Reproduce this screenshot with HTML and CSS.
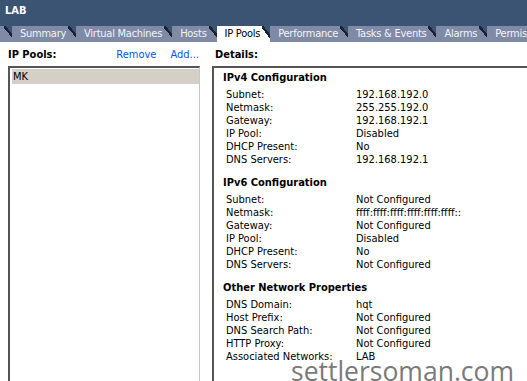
FILE: index.html
```html
<!DOCTYPE html>
<html>

<head>
    <title>LAB - IP Pools</title>
    <meta charset='utf-8' />
    <link rel="stylesheet" href="styles.css">
</head>

<body>
    <div class="top">
        <div class="title">LAB</div>
        <div class="tabs">
            <span class="tab first"></span>
            <span class="tab">Summary</span>
            <span class="tab">Virtual Machines</span>
            <span class="tab">Hosts</span>
            <span class="tab active">IP Pools</span>
            <span class="tab">Performance</span>
            <span class="tab">Tasks &amp; Events</span>
            <span class="tab">Alarms</span>
            <span class="tab">Permissions</span>
        </div>
    </div>

    <div class="main">
        <div class="pane">
            <div class="pane-head">
                <b>IP Pools:</b>
                <a href="#" class="link remove">Remove</a>
                <a href="#" class="link">Add...</a>
            </div>
            <div class="box list">
                <div class="item sel">MK</div>
            </div>
        </div>

        <div class="pane">
            <div class="pane-head"><b>Details:</b></div>
            <div class="box details">
                <div class="section">
                    <div class="sec-title">IPv4 Configuration</div>
                    <div class="row"><span>Subnet:</span><span>192.168.192.0</span></div>
                    <div class="row"><span>Netmask:</span><span>255.255.192.0</span></div>
                    <div class="row"><span>Gateway:</span><span>192.168.192.1</span></div>
                    <div class="row"><span>IP Pool:</span><span>Disabled</span></div>
                    <div class="row"><span>DHCP Present:</span><span>No</span></div>
                    <div class="row"><span>DNS Servers:</span><span>192.168.192.1</span></div>
                </div>
                <div class="section">
                    <div class="sec-title">IPv6 Configuration</div>
                    <div class="row"><span>Subnet:</span><span>Not Configured</span></div>
                    <div class="row"><span>Netmask:</span><span>ffff:ffff:ffff:ffff:ffff:ffff::</span></div>
                    <div class="row"><span>Gateway:</span><span>Not Configured</span></div>
                    <div class="row"><span>IP Pool:</span><span>Disabled</span></div>
                    <div class="row"><span>DHCP Present:</span><span>No</span></div>
                    <div class="row"><span>DNS Servers:</span><span>Not Configured</span></div>
                </div>
                <div class="section">
                    <div class="sec-title">Other Network Properties</div>
                    <div class="row"><span>DNS Domain:</span><span>hqt</span></div>
                    <div class="row"><span>Host Prefix:</span><span>Not Configured</span></div>
                    <div class="row"><span>DNS Search Path:</span><span>Not Configured</span></div>
                    <div class="row"><span>HTTP Proxy:</span><span>Not Configured</span></div>
                    <div class="row"><span>Associated Networks:</span><span>LAB</span></div>
                </div>
            </div>
        </div>
    </div>

    <div class="watermark">settlersoman.com</div>
</body>

</html>
```

FILE: styles.css
```css
body {
    margin: 0;
    width: 527px;
    height: 381px;
    overflow: hidden;
    position: relative;
    font-family: "DejaVu Sans Condensed", "DejaVu Sans", sans-serif;
    font-size: 11px;
    color: #000;
    background: #fff;
}

.top {
    height: 42px;
    background: #3c5473;
    overflow: hidden;
}

.title {
    height: 25px;
    padding-left: 5px;
    line-height: 22px;
    font-weight: bold;
    color: #fff;
}

.tabs {
    display: flex;
    height: 17px;
    white-space: nowrap;
}

.tab {
    position: relative;
    height: 16px;
    margin-top: 1px;
    padding: 0 2px 0 8px;
    margin-right: 8px;
    line-height: 16px;
    letter-spacing: -0.25px;
    background: #7e8aa6;
    color: #f2f4f8;
}

.tab::after {
    content: "";
    position: absolute;
    top: 0;
    right: -13px;
    width: 13px;
    height: 16px;
    background: linear-gradient(to top right, #7e8aa6 44%, #1c2233 44%, #1c2233 56%, transparent 56%);
}

.tab.first {
    margin-left: -6px;
    width: 0;
}

.tab.active {
    background: #fff;
    color: #000;
    height: 17px;
}

.tab.active::after {
    height: 17px;
    background: linear-gradient(to top right, #fff 44%, #1c2233 44%, #1c2233 56%, transparent 56%);
}

.main {
    display: grid;
    grid-template-columns: 192px 330px;
    gap: 12px;
    padding-left: 8px;
}

.pane-head {
    display: flex;
    height: 24px;
    align-items: center;
}

.pane-head b {
    flex: 1;
}

.pane-head b:only-child {
    padding-left: 3px;
}

.link {
    color: #0055ee;
    text-decoration: none;
    margin-right: 1px;
}

.link.remove {
    margin-right: 14px;
}

.box {
    height: 320px;
    border-top: 2px solid #555;
    border-left: 2px solid #555;
    border-right: 1px solid #c8c8c8;
    background: #fff;
}

.list {
    padding: 1px 0 0 2px;
}

.item {
    height: 15px;
    line-height: 15px;
    padding-left: 1px;
}

.item.sel {
    background: #d4d0c8;
}

.details {
    padding: 3px 0 0 9px;
    border-right: none;
}

.section {
    margin-bottom: 10px;
}

.sec-title {
    font-weight: bold;
    line-height: 13px;
    margin-bottom: 4px;
}

.row {
    display: grid;
    grid-template-columns: 130px auto;
    line-height: 13px;
    padding-left: 3px;
}

.watermark {
    position: absolute;
    left: 291px;
    top: 361px;
    font-family: "Open Sans", sans-serif;
    font-size: 26.5px;
    color: #7a7a7a;
    line-height: 20px;
}
```
